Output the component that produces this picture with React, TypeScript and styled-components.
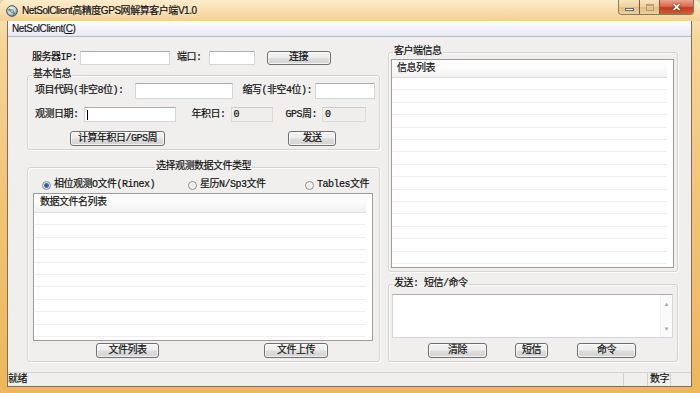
import React from "react";
import styled, { createGlobalStyle } from "styled-components";

const FORM_FONT = `"Liberation Mono", "Noto Sans CJK SC", monospace`;
const UI_FONT = `"Liberation Sans", "Noto Sans CJK SC", sans-serif`;

const GlobalStyle = createGlobalStyle`
  html, body { margin: 0; padding: 0; }
  body { width: 700px; height: 393px; overflow: hidden; background: #e8d2ad; }
  * { box-sizing: border-box; }
`;

const Window = styled.div`
  width: 700px;
  height: 393px;
  display: flex;
  flex-direction: column;
  background: linear-gradient(180deg, #fbe7c1 0%, #f6d597 10%, #f2c477 50%, #edb75a 100%);
  border-radius: 6px 6px 0 0;
  overflow: hidden;
`;

const TitleBar = styled.div`
  height: 21px;
  flex: none;
  display: flex;
  align-items: center;
  padding-left: 6px;
  background: linear-gradient(180deg, #fcecca 0%, #f8dcaa 55%, #f4d093 100%);
`;

const TitleText = styled.div`
  margin-left: 4px;
  font: 10px/12px ${UI_FONT};
  letter-spacing: -0.45px;
  color: #111;
  -webkit-text-stroke: 0.2px #111;
  text-shadow: 0 0 5px rgba(255, 255, 255, 0.9);
`;

const CaptionButtons = styled.div`
  margin-left: auto;
  margin-right: 6px;
  align-self: flex-start;
  display: flex;
  height: 15px;
  border: 1px solid #8f7a58;
  border-top: none;
  border-radius: 0 0 4px 4px;
  overflow: hidden;
`;

const CaptionButton = styled.div<{ $close?: boolean }>`
  width: ${(p) => (p.$close ? 34 : 20)}px;
  height: 100%;
  display: flex;
  align-items: center;
  justify-content: center;
  background: ${(p) =>
    p.$close
      ? "linear-gradient(180deg, #eba28c 0%, #dc6a4f 45%, #c7391f 55%, #d55c3c 100%)"
      : "linear-gradient(180deg, #f7e3bd 0%, #eed3a0 45%, #e2bd82 55%, #ead0a0 100%)"};
  & + & {
    border-left: 1px solid ${(p) => (p.$close ? "#8f5040" : "#c9ab7c")};
  }
`;

const MinGlyph = styled.div`
  width: 9px;
  height: 3px;
  margin-top: 4px;
  background: #fff;
  border: 1px solid #6a6a6a;
`;

const MaxGlyph = styled.div`
  width: 8px;
  height: 7px;
  border: 1px solid #b99d72;
  box-shadow: inset 0 1px 0 #b99d72;
`;

const CloseGlyph = styled.div`
  color: #fff;
  font: bold 11px/11px ${UI_FONT};
  text-shadow: 0 0 1px #5a2010, 0 0 2px #5a2010;
`;

const Frame = styled.div`
  flex: 1;
  display: flex;
  flex-direction: column;
  margin: 0 8px 6px 7px;
  border: 1px solid #7d6f5a;
  border-top: none;
  min-height: 0;
`;

const MenuBar = styled.div`
  height: 16px;
  flex: none;
  display: flex;
  align-items: center;
  padding-left: 4px;
  background: linear-gradient(180deg, #fcfcff 0%, #f0f1f8 60%, #e6e8f1 100%);
  border-bottom: 1px solid #b7b9c2;
  font: 10px/12px ${UI_FONT};
  letter-spacing: -0.4px;
  color: #111;
  -webkit-text-stroke: 0.15px #111;

  & u {
    text-decoration: underline;
  }
`;

const Client = styled.div`
  flex: 1;
  display: flex;
  padding-left: 19px;
  background: #f0efed;
  font: 10px/12px ${FORM_FONT};
  letter-spacing: -0.5px;
  color: #111;
  -webkit-text-stroke: 0.2px #111;
`;

const LeftColumn = styled.div`
  width: 353px;
  display: flex;
  flex-direction: column;
`;

const RightColumn = styled.div`
  width: 290px;
  margin-left: 8px;
  display: flex;
  flex-direction: column;
`;

const Row = styled.div<{ $h: number; $mt: number; $pl?: number }>`
  display: flex;
  align-items: center;
  height: ${(p) => p.$h}px;
  margin-top: ${(p) => p.$mt}px;
  padding-left: ${(p) => p.$pl ?? 0}px;
  flex: none;
`;

const Label = styled.span<{ $ml?: number }>`
  margin-left: ${(p) => p.$ml ?? 0}px;
  white-space: nowrap;
`;

const TextBox = styled.div<{ $w: number; $ml: number; $readOnly?: boolean }>`
  width: ${(p) => p.$w}px;
  height: 100%;
  margin-left: ${(p) => p.$ml}px;
  display: flex;
  align-items: center;
  padding-left: 2px;
  background: ${(p) => (p.$readOnly ? "#efeeec" : "#fff")};
  border: 1px solid ${(p) => (p.$readOnly ? "#dcdad6" : "#d2d5da")};
  border-top-color: ${(p) => (p.$readOnly ? "#cfcdc9" : "#abadb3")};
`;

const Caret = styled.div`
  width: 1px;
  height: 10px;
  background: #000;
`;

const Button = styled.div<{ $w: number; $ml: number }>`
  width: ${(p) => p.$w}px;
  height: 100%;
  margin-left: ${(p) => p.$ml}px;
  display: flex;
  align-items: center;
  justify-content: center;
  border: 1px solid #707070;
  border-radius: 3px;
  background: linear-gradient(180deg, #f4f4f4 0%, #ececec 48%, #dedede 52%, #d2d2d2 100%);
  box-shadow: inset 0 0 0 1px rgba(255, 255, 255, 0.7);
  white-space: nowrap;
`;

const GroupBox = styled.fieldset<{ $mt: number }>`
  margin: ${(p) => p.$mt}px 0 0 0;
  padding: 0 0 3px 0;
  min-width: 0;
  border: 1px solid #d5d3cf;
  border-radius: 3px;
  box-shadow: inset 1px 1px 0 #fbfbfa, 1px 1px 0 #fbfbfa;
  display: flex;
  flex-direction: column;
`;

const Legend = styled.legend<{ $center?: boolean }>`
  font: 10px/12px ${FORM_FONT};
  letter-spacing: -0.5px;
  padding: 0 1px;
  margin: ${(p) => (p.$center ? "0 auto" : "0 0 0 4px")};
  color: #111;
  -webkit-text-stroke: 0.2px #111;
`;

const Radio = styled.div<{ $w?: number; $ml?: number }>`
  display: flex;
  align-items: center;
  width: ${(p) => (p.$w ? `${p.$w}px` : "auto")};
  margin-left: ${(p) => p.$ml ?? 0}px;
  white-space: nowrap;
`;

const RadioDot = styled.div<{ $checked?: boolean }>`
  width: 9px;
  height: 9px;
  border-radius: 50%;
  margin-right: 3px;
  border: 1px solid #8e8f8f;
  background: ${(p) =>
    p.$checked
      ? "radial-gradient(circle, #1f4f8f 0, #3b74b8 2px, #dfe6ee 3px, #f4f4f4 100%)"
      : "radial-gradient(circle, #e6e6e6 0, #f3f3f3 60%, #fff 100%)"};
`;

const ListView = styled.div<{ $w: number; $h: number; $ml: number; $mt: number }>`
  width: ${(p) => p.$w}px;
  height: ${(p) => p.$h}px;
  margin-left: ${(p) => p.$ml}px;
  margin-top: ${(p) => p.$mt}px;
  flex: none;
  display: flex;
  flex-direction: column;
  border: 1px solid #9c9c9c;
  background: #fff;
`;

const ListHeader = styled.div<{ $h: number; $pl: number }>`
  height: ${(p) => p.$h}px;
  flex: none;
  display: flex;
  align-items: center;
  padding-left: ${(p) => p.$pl}px;
  background: linear-gradient(180deg, #ffffff 0%, #fbfbfb 50%, #f1f1f2 100%);
  border-bottom: 1px solid #dcdcdc;
  margin-right: 6px;
`;

const ListBody = styled.div`
  flex: 1;
  background: repeating-linear-gradient(
    180deg,
    #ffffff 0px,
    #ffffff 11.4px,
    #f3efef 11.4px,
    #f3efef 12.4px
  );
  margin-right: 6px;
`;

const Memo = styled.div`
  width: 281px;
  height: 44px;
  margin: 4px 0 0 3px;
  flex: none;
  display: flex;
  justify-content: flex-end;
  background: #fff;
  border: 1px solid #d2d5da;
  border-top-color: #abadb3;
`;

const ScrollBar = styled.div`
  width: 12px;
  display: flex;
  flex-direction: column;
  justify-content: space-between;
  align-items: center;
  padding: 6px 0 5px;
  background: #fafafa;
  border-left: 1px solid #f0f0f0;
  color: #a8a8a8;
  font: 6px/6px ${UI_FONT};
  letter-spacing: 0;
  -webkit-text-stroke: 0;
`;

const StatusBar = styled.div`
  height: 14px;
  flex: none;
  display: flex;
  align-items: stretch;
  background: #f0efed;
  border-top: 1px solid #d6d4d0;
  font: 10px/12px ${FORM_FONT};
  letter-spacing: -0.5px;
  color: #111;
  -webkit-text-stroke: 0.2px #111;
`;

const StatusPane = styled.div<{ $w?: number }>`
  ${(p) => (p.$w ? `width: ${p.$w}px;` : "flex: 1;")}
  display: flex;
  align-items: center;
  padding-left: ${(p) => (p.$w ? 2 : 0)}px;
  border-left: ${(p) => (p.$w ? "1px solid #d4d1cc" : "none")};
`;

function AppIcon() {
  return (
    <svg width="12" height="12" viewBox="0 0 12 12">
      <defs>
        <radialGradient id="ic" cx="40%" cy="35%" r="70%">
          <stop offset="0" stopColor="#ffffff" />
          <stop offset="0.55" stopColor="#c9d6e2" />
          <stop offset="1" stopColor="#5f7a90" />
        </radialGradient>
      </defs>
      <circle cx="6" cy="6" r="5.3" fill="url(#ic)" stroke="#34506a" strokeWidth="1" />
      <path d="M2.2 4.2 Q4 2.6 5 4.4 Q4 6 2.6 6.6 Z" fill="#4f9a46" />
      <path d="M6.8 7.4 Q8.8 6.8 9.6 8.2 Q8.4 10 7 9.6 Z" fill="#4f9a46" />
      <circle cx="6" cy="6" r="1.4" fill="#fff" stroke="#2a3f52" strokeWidth="0.7" />
    </svg>
  );
}

export default function App() {
  return (
    <>
      <GlobalStyle />
      <Window>
        <TitleBar>
          <AppIcon />
          <TitleText>NetSolClient高精度GPS网解算客户端V1.0</TitleText>
          <CaptionButtons>
            <CaptionButton>
              <MinGlyph />
            </CaptionButton>
            <CaptionButton>
              <MaxGlyph />
            </CaptionButton>
            <CaptionButton $close>
              <CloseGlyph>✕</CloseGlyph>
            </CaptionButton>
          </CaptionButtons>
        </TitleBar>
        <Frame>
          <MenuBar>
            <span>
              NetSolClient(<u>C</u>)
            </span>
          </MenuBar>
          <Client>
            <LeftColumn>
              <Row $h={14} $mt={14} $pl={5}>
                <Label>服务器IP:</Label>
                <TextBox $w={90} $ml={3} />
                <Label $ml={7}>端口:</Label>
                <TextBox $w={46} $ml={7} />
                <Button $w={64} $ml={12}>连接</Button>
              </Row>

              <GroupBox $mt={4}>
                <Legend>基本信息</Legend>
                <Row $h={16} $mt={2} $pl={7}>
                  <Label>项目代码(非空8位):</Label>
                  <TextBox $w={98} $ml={11} />
                  <Label $ml={10}>缩写(非空4位):</Label>
                  <TextBox $w={60} $ml={3} />
                </Row>
                <Row $h={15} $mt={8} $pl={7}>
                  <Label>观测日期:</Label>
                  <TextBox $w={92} $ml={5}>
                    <Caret />
                  </TextBox>
                  <Label $ml={16}>年积日:</Label>
                  <TextBox $w={42} $ml={5} $readOnly>0</TextBox>
                  <Label $ml={13}>GPS周:</Label>
                  <TextBox $w={44} $ml={5} $readOnly>0</TextBox>
                </Row>
                <Row $h={15} $mt={9}>
                  <Button $w={95} $ml={42}>计算年积日/GPS周</Button>
                  <Button $w={48} $ml={123}>发送</Button>
                </Row>
              </GroupBox>

              <GroupBox $mt={11}>
                <Legend $center>选择观测数据文件类型</Legend>
                <Row $h={10} $mt={7}>
                  <Radio $w={146} $ml={14}>
                    <RadioDot $checked />
                    相位观测O文件(Rinex)
                  </Radio>
                  <Radio $w={117}>
                    <RadioDot />
                    星历N/Sp3文件
                  </Radio>
                  <Radio>
                    <RadioDot />
                    Tables文件
                  </Radio>
                </Row>
                <ListView $w={340} $h={148} $ml={5} $mt={3}>
                  <ListHeader $h={19} $pl={6}>数据文件名列表</ListHeader>
                  <ListBody />
                </ListView>
                <Row $h={15} $mt={2}>
                  <Button $w={63} $ml={68}>文件列表</Button>
                  <Button $w={64} $ml={105}>文件上传</Button>
                </Row>
              </GroupBox>
            </LeftColumn>

            <RightColumn>
              <GroupBox $mt={9}>
                <Legend>客户端信息</Legend>
                <ListView $w={283} $h={209} $ml={2} $mt={1}>
                  <ListHeader $h={18} $pl={5}>信息列表</ListHeader>
                  <ListBody />
                </ListView>
              </GroupBox>

              <GroupBox $mt={6}>
                <Legend>发送: 短信/命令</Legend>
                <Memo>
                  <ScrollBar>
                    <span>▲</span>
                    <span>▼</span>
                  </ScrollBar>
                </Memo>
                <Row $h={15} $mt={5}>
                  <Button $w={59} $ml={39}>清除</Button>
                  <Button $w={33} $ml={28}>短信</Button>
                  <Button $w={59} $ml={29}>命令</Button>
                </Row>
              </GroupBox>
            </RightColumn>
          </Client>
          <StatusBar>
            <StatusPane>就绪</StatusPane>
            <StatusPane $w={24} />
            <StatusPane $w={23}>数字</StatusPane>
            <StatusPane $w={21} />
          </StatusBar>
        </Frame>
      </Window>
    </>
  );
}
